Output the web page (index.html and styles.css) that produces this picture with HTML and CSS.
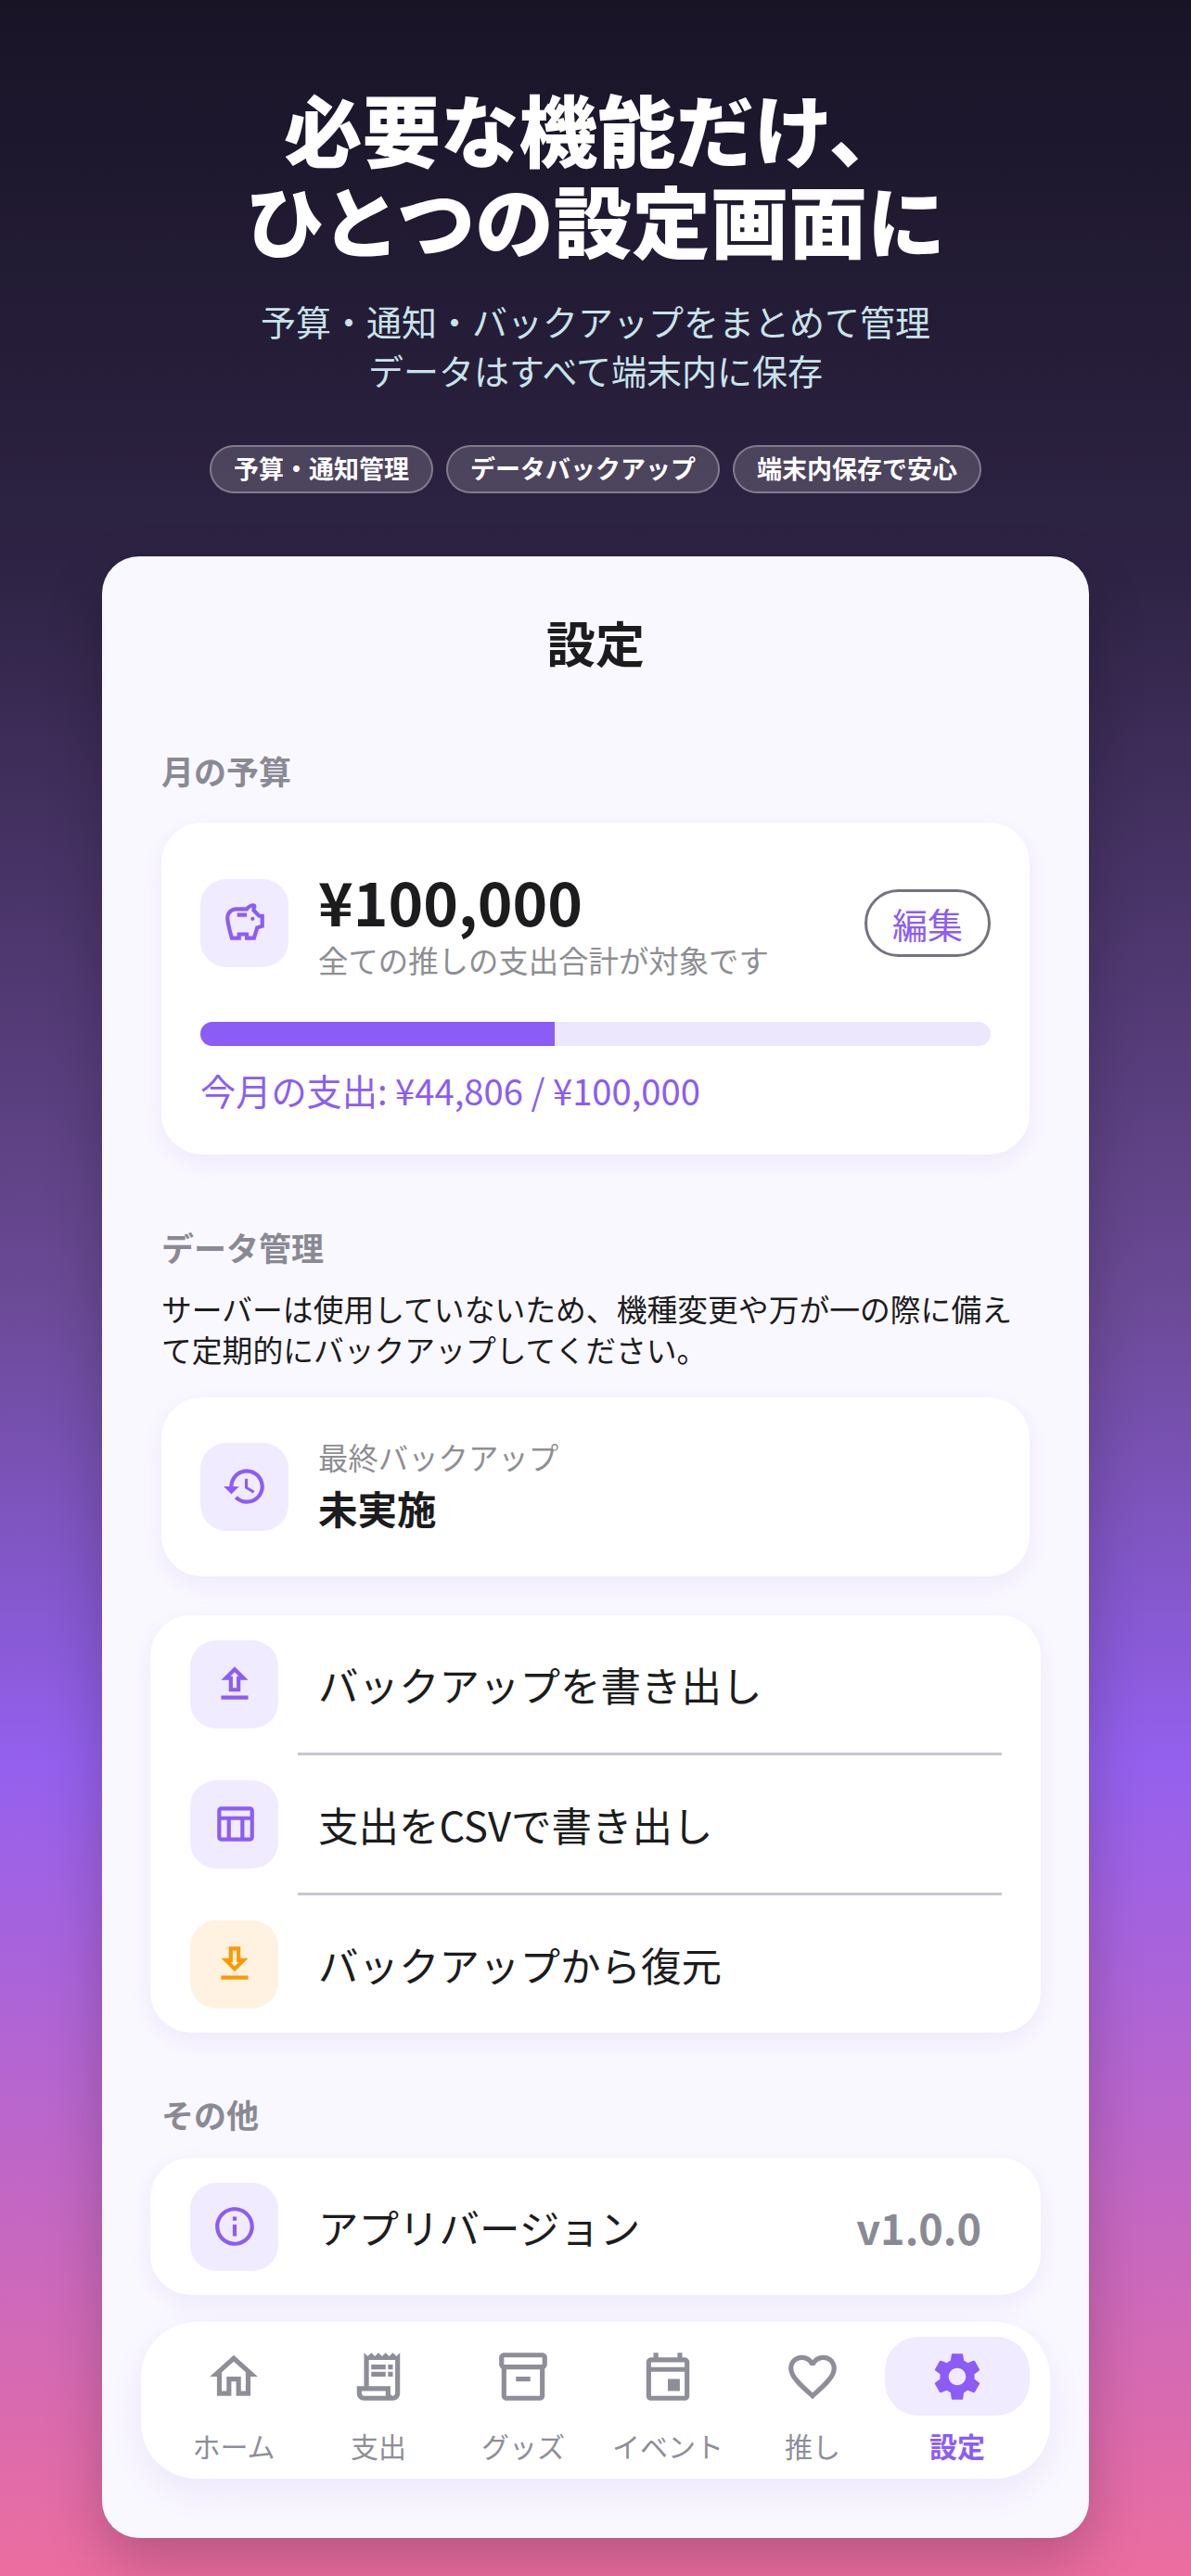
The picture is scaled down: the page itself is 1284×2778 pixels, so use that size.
FILE: index.html
```html
<!DOCTYPE html>
<html lang="ja">
<head>
  <meta charset="UTF-8" />
  <meta name="viewport" content="width=device-width, initial-scale=1.0" />
  <title>設定</title>
  <link rel="stylesheet" href="styles.css">
</head>
<body>

  <header class="hero">
    <h1>必要な機能だけ、<br>ひとつの設定画面に</h1>
    <p>予算・通知・バックアップをまとめて管理<br>データはすべて端末内に保存</p>
    <div class="pills">
      <span class="pill">予算・通知管理</span>
      <span class="pill">データバックアップ</span>
      <span class="pill">端末内保存で安心</span>
    </div>
  </header>

  <main class="panel">
    <h2 class="panel-title">設定</h2>

    <h3 class="section-label first">月の予算</h3>
    <section class="card budget">
      <div class="budget-row">
        <div class="icon-box">
          <svg class="icon" viewBox="0 0 24 24"><path d="M15 10c0-.55.45-1 1-1s1 .45 1 1-.45 1-1 1-1-.45-1-1zM8 9h5V7H8v2zm14-1.5v6.97l-2.82.94L17.5 21H12v-2h-2v2H4.5S2 12.54 2 9.5 4.46 4 7.5 4h5c.91-1.21 2.36-2 4-2 .83 0 1.5.67 1.5 1.5 0 .21-.04.4-.12.58-.14.32-.26.69-.32 1.09l2.27 2.33H22zm-2 2h-1L15.5 6c0-.65.09-1.29.26-1.91-.97.25-1.76.97-2.09 1.91H7.5C5.57 6 4 7.57 4 9.5c0 1.88 1.22 6.65 2.01 9.5H8v-2h6v2h2.01l1.55-5.15 2.44-.82V9.5z"/></svg>
        </div>
        <div class="budget-text">
          <div class="amount">¥100,000</div>
          <div class="muted">全ての推しの支出合計が対象です</div>
        </div>
        <button class="edit-btn">編集</button>
      </div>
      <div class="bar"><div class="bar-fill" style="width:44.8%"></div></div>
      <div class="spend">今月の支出: ¥44,806 / ¥100,000</div>
    </section>

    <h3 class="section-label">データ管理</h3>
    <p class="note">サーバーは使用していないため、機種変更や万が一の際に備えて定期的にバックアップしてください。</p>
    <section class="card last-backup">
      <div class="icon-box">
        <svg class="icon" viewBox="0 0 24 24"><path d="M13 3c-4.97 0-9 4.03-9 9H1l3.89 3.89.07.14L9 12H6c0-3.87 3.13-7 7-7s7 3.13 7 7-3.13 7-7 7c-1.93 0-3.68-.79-4.94-2.06l-1.42 1.42C8.27 19.99 10.51 21 13 21c4.97 0 9-4.03 9-9s-4.03-9-9-9zm-1 5v5l4.28 2.54.72-1.21-3.5-2.08V8H12z"/></svg>
      </div>
      <div>
        <div class="muted">最終バックアップ</div>
        <div class="status">未実施</div>
      </div>
    </section>

    <section class="list">
      <div class="row">
        <div class="icon-box">
          <svg class="icon" viewBox="0 0 24 24"><path d="M9 16h6v-6h4l-7-7-7 7h4zm3-10.17L14.17 8H13v6h-2V8H9.83L12 5.83zM5 18h14v2H5z"/></svg>
        </div>
        <span class="row-text">バックアップを書き出し</span>
      </div>
      <div class="divider"></div>
      <div class="row">
        <div class="icon-box">
          <svg class="icon" viewBox="0 0 24 24"><path d="M20 3H5c-1.1 0-2 .9-2 2v14c0 1.1.9 2 2 2h15c1.1 0 2-.9 2-2V5c0-1.1-.9-2-2-2zm0 2v3H5V5h15zm-5 14h-5v-9h5v9zM5 10h3v9H5v-9zm12 9v-9h3v9h-3z"/></svg>
        </div>
        <span class="row-text">支出をCSVで書き出し</span>
      </div>
      <div class="divider"></div>
      <div class="row">
        <div class="icon-box orange">
          <svg class="icon" viewBox="0 0 24 24"><path d="M19 9h-4V3H9v6H5l7 7 7-7zm-8 2V5h2v6h1.17L12 13.17 9.83 11H11zm-6 7h14v2H5z"/></svg>
        </div>
        <span class="row-text">バックアップから復元</span>
      </div>
    </section>

    <h3 class="section-label other">その他</h3>
    <section class="list version-card">
      <div class="row">
        <div class="icon-box">
          <svg class="icon" viewBox="0 0 24 24"><path d="M11 7h2v2h-2zm0 4h2v6h-2zm1-9C6.48 2 2 6.48 2 12s4.48 10 10 10 10-4.48 10-10S17.52 2 12 2zm0 18c-4.41 0-8-3.59-8-8s3.59-8 8-8 8 3.59 8 8-3.59 8-8 8z"/></svg>
        </div>
        <span class="row-text">アプリバージョン</span>
        <span class="version">v1.0.0</span>
      </div>
    </section>

    <nav class="tabbar">
      <div class="tab">
        <div class="tab-icon">
          <svg viewBox="0 0 24 24"><path d="M12 5.69l5 4.5V18h-2v-6H9v6H7v-7.81l5-4.5M12 3L2 12h3v8h6v-6h2v6h6v-8h3L12 3z"/></svg>
        </div>
        <span>ホーム</span>
      </div>
      <div class="tab">
        <div class="tab-icon">
          <svg viewBox="0 0 24 24"><path d="M19.5 3.5L18 2l-1.5 1.5L15 2l-1.5 1.5L12 2l-1.5 1.5L9 2 7.5 3.5 6 2v14H3v3c0 1.66 1.34 3 3 3h12c1.66 0 3-1.34 3-3V2l-1.5 1.5zM15 20H6c-.55 0-1-.45-1-1v-1h10v2zm4-1c0 .55-.45 1-1 1s-1-.45-1-1v-3H8V5h11v14z"/><path d="M9 7h6v2H9zM16 7h2v2h-2zM9 10h6v2H9zM16 10h2v2h-2z"/></svg>
        </div>
        <span>支出</span>
      </div>
      <div class="tab">
        <div class="tab-icon">
          <svg viewBox="0 0 24 24"><path d="M20 2H4c-1 0-2 .9-2 2v3.01c0 .72.43 1.34 1 1.69V20c0 1.1 1.1 2 2 2h14c.9 0 2-.9 2-2V8.7c.57-.35 1-.97 1-1.69V4c0-1.1-1-2-2-2zm-1 18H5V9h14v11zm1-13H4V4h16v3z"/><path d="M9 12h6v2H9z"/></svg>
        </div>
        <span>グッズ</span>
      </div>
      <div class="tab">
        <div class="tab-icon">
          <svg viewBox="0 0 24 24"><path d="M19 4h-1V2h-2v2H8V2H6v2H5c-1.11 0-1.99.9-1.99 2L3 20c0 1.1.89 2 2 2h14c1.1 0 2-.9 2-2V6c0-1.1-.9-2-2-2zm0 16H5V10h14v10zm0-12H5V6h14v2zm-7 5h5v5h-5z"/></svg>
        </div>
        <span>イベント</span>
      </div>
      <div class="tab">
        <div class="tab-icon">
          <svg viewBox="0 0 24 24"><path d="M16.5 3c-1.74 0-3.41.81-4.5 2.09C10.91 3.81 9.24 3 7.5 3 4.42 3 2 5.42 2 8.5c0 3.78 3.4 6.86 8.55 11.54L12 21.35l1.45-1.32C18.6 15.36 22 12.28 22 8.5 22 5.42 19.58 3 16.5 3zm-4.4 15.55l-.1.1-.1-.1C7.14 14.24 4 11.39 4 8.5 4 6.5 5.5 5 7.5 5c1.54 0 3.04.99 3.57 2.36h1.87C13.46 5.99 14.96 5 16.5 5c2 0 3.5 1.5 3.5 3.5 0 2.89-3.14 5.74-7.9 10.05z"/></svg>
        </div>
        <span>推し</span>
      </div>
      <div class="tab active">
        <div class="tab-icon">
          <svg viewBox="0 0 24 24"><path d="M19.14 12.94c.04-.3.06-.61.06-.94 0-.32-.02-.64-.07-.94l2.03-1.58c.18-.14.23-.41.12-.61l-1.92-3.32c-.12-.22-.37-.29-.59-.22l-2.39.96c-.5-.38-1.03-.7-1.62-.94l-.36-2.54c-.04-.24-.24-.41-.48-.41h-3.84c-.24 0-.43.17-.47.41l-.36 2.54c-.59.24-1.13.57-1.62.94l-2.39-.96c-.22-.08-.47 0-.59.22L2.74 8.87c-.12.21-.08.47.12.61l2.03 1.58c-.05.3-.09.63-.09.94s.02.64.07.94l-2.03 1.58c-.18.14-.23.41-.12.61l1.92 3.32c.12.22.37.29.59.22l2.39-.96c.5.38 1.03.7 1.62.94l.36 2.54c.05.24.24.41.48.41h3.84c.24 0 .44-.17.47-.41l.36-2.54c.59-.24 1.13-.56 1.62-.94l2.39.96c.22.08.47 0 .59-.22l1.92-3.32c.12-.22.07-.47-.12-.61l-2.01-1.58zM12 15.6c-1.98 0-3.6-1.62-3.6-3.6s1.62-3.6 3.6-3.6 3.6 1.62 3.6 3.6-1.62 3.6-3.6 3.6z"/></svg>
        </div>
        <span>設定</span>
      </div>
    </nav>
  </main>

</body>
</html>
```

FILE: styles.css
```css
* {
  box-sizing: border-box;
}
html, body {
  margin: 0;
  padding: 0;
}
body {
  width: 1284px;
  height: 2778px;
  overflow: hidden;
  font-family: "Noto Sans CJK JP", "Noto Sans", sans-serif;
  color: #1c1c1e;
  background: linear-gradient(180deg, #181426 0%, #2e2344 22%, #6b4a96 50.4%, #9460ee 68.4%, #ec6d9f 100%);
}

/* hero */
.hero {
  padding-top: 88px;
  text-align: center;
}
.hero h1 {
  margin: 0;
  font-size: 84.5px;
  line-height: 98px;
  font-weight: 900;
  color: #fff;
}
.hero p {
  margin: 35px 0 0;
  font-size: 38px;
  line-height: 53px;
  color: #c9e3ea;
}
.pills {
  display: flex;
  justify-content: center;
  gap: 14px;
  margin-top: 55px;
}
.pill {
  height: 52px;
  padding: 0 24px;
  border: 2px solid rgba(255,255,255,0.3);
  border-radius: 26px;
  background: rgba(255,255,255,0.16);
  color: #fff;
  font-size: 27px;
  line-height: 46px;
  font-weight: 700;
}

/* panel */
.panel {
  width: 1064px;
  height: 2137px;
  margin: 68px auto 0;
  padding: 57px 52px 0;
  border-radius: 40px;
  background: #faf8ff;
  box-shadow: 0 24px 60px rgba(0,0,0,0.22);
}
.panel-title {
  margin: 0;
  text-align: center;
  font-size: 53px;
  line-height: 70px;
  font-weight: 700;
}
.section-label {
  margin: 78px 12px 0;
  font-size: 35px;
  line-height: 44px;
  font-weight: 700;
  color: #8a8a94;
}
.section-label.first {
  margin-top: 82px;
}
.section-label.other {
  margin-top: 66px;
}
.note {
  margin: 22px 12px 0;
  font-size: 32.8px;
  line-height: 44px;
}

/* cards */
.card {
  margin: 0 12px;
  border-radius: 44px;
  background: #fff;
  box-shadow: 0 8px 28px rgba(110,80,220,0.09);
}
.icon-box {
  flex: none;
  display: flex;
  align-items: center;
  justify-content: center;
  width: 95px;
  height: 95px;
  border-radius: 28px;
  background: #f0ebff;
}
.icon-box.orange {
  background: #fff2e0;
}
.icon {
  width: 50px;
  height: 50px;
  fill: #8b5cf6;
}
.orange .icon {
  fill: #ff9800;
}
.muted {
  font-size: 32.4px;
  line-height: 44px;
  color: #8e8e93;
}

.budget {
  margin-top: 34px;
  padding: 46px 42px 44px;
}
.budget-row {
  display: flex;
  align-items: center;
}
.budget-text {
  flex: 1;
  margin-left: 32px;
}
.amount {
  margin-bottom: 4px;
  font-size: 64px;
  line-height: 76px;
  font-weight: 700;
}
.edit-btn {
  flex: none;
  width: 136px;
  height: 73px;
  padding: 0;
  border: 3px solid #77727f;
  border-radius: 37px;
  background: #fff;
  color: #8b5cf6;
  font-family: inherit;
  font-size: 38px;
}
.bar {
  height: 26px;
  margin-top: 45px;
  border-radius: 13px;
  background: #ede7fd;
  overflow: hidden;
}
.bar-fill {
  height: 100%;
  background: #8b5cf6;
}
.spend {
  margin-top: 23px;
  font-size: 38.2px;
  line-height: 50px;
  color: #8b5cf6;
}

.last-backup {
  display: flex;
  align-items: center;
  gap: 32px;
  margin-top: 30px;
  padding: 48px 42px 49px;
}
.last-backup .muted {
  line-height: 32px;
}
.status {
  margin-top: 14px;
  font-size: 42.5px;
  line-height: 50px;
  font-weight: 700;
}

/* list rows */
.list {
  margin-top: 42px;
  border-radius: 44px;
  background: #fff;
  box-shadow: 0 8px 28px rgba(110,80,220,0.09);
}
.version-card {
  margin-top: 25px;
}
.row {
  display: flex;
  align-items: center;
  gap: 43px;
  height: 148px;
  padding: 0 42px 0 43px;
}
.row-text {
  flex: 1;
  font-size: 43.5px;
}
.divider {
  height: 3px;
  margin: 0 42px 0 159px;
  background: #c9c6d0;
}
.version {
  margin-right: 22px;
  font-size: 45px;
  font-weight: 700;
  color: #8a8a94;
}

/* bottom tabs */
.tabbar {
  display: flex;
  height: 169px;
  margin: 29px -10px 0;
  padding: 16px 22px 0;
  border-radius: 60px;
  background: #fff;
  box-shadow: 0 14px 44px rgba(110,80,220,0.1);
}
.tab {
  flex: 1;
  text-align: center;
  font-size: 30px;
  line-height: 40px;
  color: #8e8e99;
}
.tab-icon {
  display: flex;
  align-items: center;
  justify-content: center;
  height: 85px;
  margin-bottom: 12px;
  border-radius: 36px;
}
.tab-icon svg {
  width: 62px;
  height: 62px;
  fill: #8e8e99;
}
.tab.active {
  color: #8b5cf6;
  font-weight: 700;
}
.tab.active .tab-icon {
  background: #f0ebff;
}
.tab.active svg {
  fill: #8b5cf6;
}
```
